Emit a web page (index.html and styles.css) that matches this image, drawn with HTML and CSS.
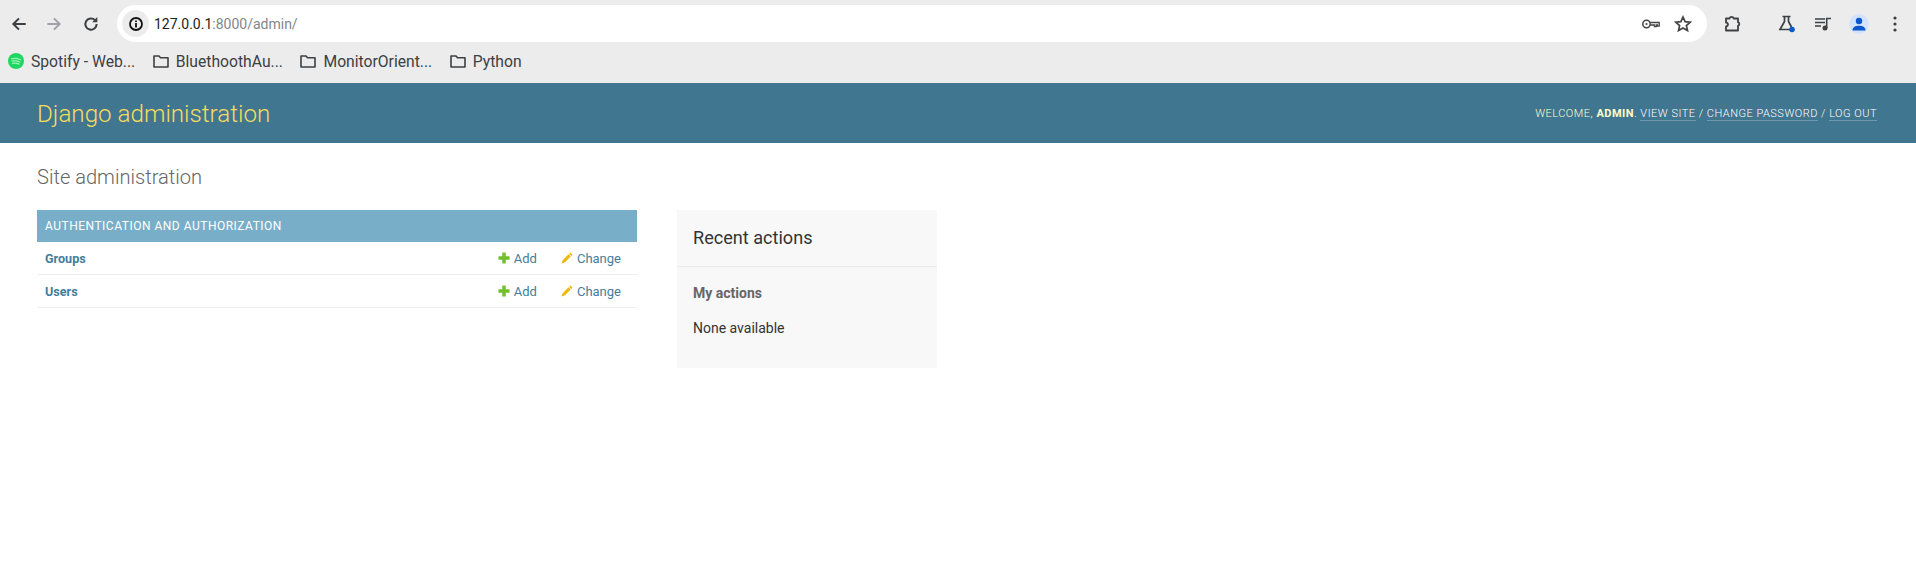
FILE: index.html
```html
<!DOCTYPE html>
<html>
    <head>
        <title>Site administration</title>
        <link rel="stylesheet" href="styles.css">
    </head>
    <body>
        <div class="chrome">
            <div class="toolbar">
                <svg class="navIcon" viewBox="0 0 16 16"><path d="M14 8H3M8 3L3 8l5 5" fill="none" stroke="#3c4043" stroke-width="1.8"/></svg>
                <svg class="navIcon forward" viewBox="0 0 16 16"><path d="M2 8h11M8 3l5 5-5 5" fill="none" stroke="#a0a2a5" stroke-width="1.8"/></svg>
                <svg class="navIcon reload" viewBox="0 0 16 16"><path d="M13 8a5 5 0 1 1-1.5-3.5" fill="none" stroke="#3c4043" stroke-width="1.8"/><path d="M13.6 1.8v4.6H9z" fill="#3c4043"/></svg>
                <div class="omnibox">
                    <span class="siteInfo">
                        <svg viewBox="0 0 16 16" width="16" height="16"><circle cx="8" cy="8" r="6" fill="none" stroke="#111" stroke-width="1.8"/><path d="M8 7v4.4M8 4.4v1.5" stroke="#111" stroke-width="1.8"/></svg>
                    </span>
                    <span class="url">127.0.0.1<span class="urlDim">:8000/admin/</span></span>
                    <svg class="keyIcon" viewBox="0 0 18 10" width="18" height="10"><circle cx="4.500" cy="5" r="3.700" fill="none" stroke="#444" stroke-width="1.500"/><circle cx="4.500" cy="5" r="1.100" fill="#444"/><path d="M8.200 3.500h9v3.700h-1.800V6h-1.200v1.700h-1.800V6H8.200" fill="none" stroke="#444" stroke-width="1.300"/></svg>
                    <svg class="starIcon" viewBox="0 0 18 18" width="18" height="18"><path d="M9 2l2.100 4.700 5.100.5-3.800 3.400 1.100 5L9 13l-4.500 2.600 1.100-5-3.800-3.400 5.100-.5z" fill="none" stroke="#444" stroke-width="1.700"/></svg>
                </div>
                <svg class="extIcon" viewBox="0 0 18 18" width="18" height="18"><path d="M2 3.500h3.500a2.200 2.200 0 0 1 4.200 0H14v3.700a1.900 1.900 0 0 1 0 3.600v4.700H2v-4a2 2 0 0 0 0-4z" fill="none" stroke="#3c4043" stroke-width="1.800" stroke-linejoin="round"/></svg>
                <svg class="labIcon" viewBox="0 0 20 20" width="20" height="20"><path d="M5.500 2.500h8M7.500 2.500v5L3 15.500h10" fill="none" stroke="#3c4043" stroke-width="1.700"/><path d="M11.500 2.500v5l3 5.500" fill="none" stroke="#3c4043" stroke-width="1.700"/><circle cx="15" cy="15.500" r="2.800" fill="#0b57d0"/></svg>
                <svg class="mediaIcon" viewBox="0 0 16 14" width="16" height="14"><path d="M0 2h10M0 5.500h10M0 9h6" stroke="#3c4043" stroke-width="1.500"/><circle cx="10" cy="11" r="2.500" fill="#3c4043"/><path d="M11.700 11V1.500H16" fill="none" stroke="#3c4043" stroke-width="1.600"/></svg>
                <span class="avatar">
                    <svg viewBox="0 0 14 14" width="14" height="14"><circle cx="7" cy="4" r="3.200" fill="#0b57d0"/><path d="M0.500 13.500c0-3.500 3-4.800 6.500-4.800s6.500 1.300 6.500 4.800z" fill="#0b57d0"/></svg>
                </span>
                <svg class="menuIcon" viewBox="0 0 4 16" width="4" height="16"><circle cx="2" cy="2" r="1.600" fill="#3c4043"/><circle cx="2" cy="8" r="1.600" fill="#3c4043"/><circle cx="2" cy="14" r="1.600" fill="#3c4043"/></svg>
            </div>
            <div class="bookmarks">
                <span class="bookmark">
                    <svg viewBox="0 0 16 16" width="16" height="16"><circle cx="8" cy="8" r="8" fill="#1ed760"/><path d="M3.500 5.800c3-.8 6-.6 9 .9M4 8.100c2.600-.6 5.200-.4 7.800.9M4.500 10.300c2.200-.5 4.400-.3 6.500.8" fill="none" stroke="#9ff0bb" stroke-width="1.200" stroke-linecap="round"/></svg>
                    Spotify - Web...
                </span>
                <span class="bookmark">
                    <svg viewBox="0 0 16 14" width="16" height="14"><path d="M1 2h5l1.500 1.800H15V13H1z" fill="none" stroke="#3c4043" stroke-width="1.600" stroke-linejoin="round"/></svg>
                    BluethoothAu...
                </span>
                <span class="bookmark">
                    <svg viewBox="0 0 16 14" width="16" height="14"><path d="M1 2h5l1.500 1.800H15V13H1z" fill="none" stroke="#3c4043" stroke-width="1.600" stroke-linejoin="round"/></svg>
                    MonitorOrient...
                </span>
                <span class="bookmark">
                    <svg viewBox="0 0 16 14" width="16" height="14"><path d="M1 2h5l1.500 1.800H15V13H1z" fill="none" stroke="#3c4043" stroke-width="1.600" stroke-linejoin="round"/></svg>
                    Python
                </span>
            </div>
        </div>

        <div id="header">
            <div id="branding">Django administration</div>
            <div id="userTools">
                WELCOME, <strong>ADMIN</strong>.
                <a href="#">VIEW SITE</a> /
                <a href="#">CHANGE PASSWORD</a> /
                <a href="#">LOG OUT</a>
            </div>
        </div>

        <div id="content">
            <h1>Site administration</h1>
            <div class="columns">
                <div class="appList">
                    <div class="caption">AUTHENTICATION AND AUTHORIZATION</div>
                    <div class="modelRow">
                        <a class="modelName" href="#">Groups</a>
                        <a class="addLink" href="#">
                            <svg viewBox="0 0 12 12" width="12" height="12"><path d="M4.300 .5h3.400v3.800h3.800v3.400H7.700v3.800H4.300V7.700H.5V4.300h3.800z" fill="#70bf2b"/></svg>
                            Add
                        </a>
                        <a class="changeLink" href="#">
                            <svg viewBox="0 0 12 12" width="12" height="12"><path d="M9.300 .5l2.200 2.200-1.200 1.200-2.200-2.200zM7.500 2.300l2.200 2.200-6 6-3 1 .8-3z" fill="#efb80b"/></svg>
                            Change
                        </a>
                    </div>
                    <div class="modelRow">
                        <a class="modelName" href="#">Users</a>
                        <a class="addLink" href="#">
                            <svg viewBox="0 0 12 12" width="12" height="12"><path d="M4.300 .5h3.400v3.800h3.800v3.400H7.700v3.800H4.300V7.700H.5V4.300h3.800z" fill="#70bf2b"/></svg>
                            Add
                        </a>
                        <a class="changeLink" href="#">
                            <svg viewBox="0 0 12 12" width="12" height="12"><path d="M9.300 .5l2.200 2.200-1.200 1.200-2.200-2.200zM7.500 2.300l2.200 2.200-6 6-3 1 .8-3z" fill="#efb80b"/></svg>
                            Change
                        </a>
                    </div>
                </div>
                <div class="recentActions">
                    <h2>Recent actions</h2>
                    <h3>My actions</h3>
                    <p>None available</p>
                </div>
            </div>
        </div>
    </body>
</html>
```

FILE: styles.css
```css
html, body{
    margin:0;
    padding:0;
    background-color:white;
}
body{
    height:574px;
    overflow:hidden;
    font-family:Roboto, "Liberation Sans", sans-serif;
    color:#333;
}
h1,h2,h3,p{
    margin:0;
}
a{
    text-decoration:none;
}

/* Browser bars */
.chrome{
    height:83px;
    background-color:#ececec;
    box-sizing:border-box;
    padding-top:5px;
}
.toolbar{
    height:37px;
    display:flex;
    align-items:center;
}
.navIcon{
    width:18px;
    height:18px;
    margin-left:10px;
    flex:none;
}
.navIcon.forward{
    margin-left:17px;
}
.navIcon.reload{
    margin-left:19px;
}
.omnibox{
    flex:none;
    width:1590px;
    height:37px;
    margin-left:17px;
    background-color:white;
    border-radius:19px;
    display:flex;
    align-items:center;
    box-sizing:border-box;
    padding-left:5px;
}
.siteInfo{
    width:27px;
    height:27px;
    border-radius:50%;
    background-color:#ececec;
    display:flex;
    align-items:center;
    justify-content:center;
    flex:none;
}
.url{
    margin-left:5px;
    font-size:14px;
    color:#202124;
    flex:1;
}
.urlDim{
    color:#80868b;
}
.keyIcon{
    margin-right:14px;
}
.starIcon{
    margin-right:15px;
}
.extIcon{
    margin-left:17px;
}
.labIcon{
    margin-left:35px;
}
.mediaIcon{
    margin-left:18px;
}
.avatar{
    width:14px;
    height:14px;
    padding:3px;
    margin-left:18px;
    border-radius:50%;
    background-color:#d3e3fd;
    display:flex;
}
.menuIcon{
    margin-left:24px;
}
.bookmarks{
    height:38px;
    display:flex;
    align-items:center;
    padding-left:8px;
    gap:17.5px;
}
.bookmark{
    display:flex;
    align-items:center;
    gap:7px;
    font-size:15.7px;
    color:#3c4043;
}

/* Django header */
#header{
    height:60px;
    background-color:#417690;
    display:flex;
    align-items:center;
    justify-content:space-between;
    padding:0 39px 0 37px;
}
#branding{
    font-size:24.2px;
    font-weight:300;
    color:#f5dd5d;
    padding-top:2px;
}
#userTools{
    font-size:11px;
    font-weight:300;
    letter-spacing:0.5px;
    color:#ffc;
}
#userTools strong{
    font-weight:700;
}
#userTools a{
    color:white;
    border-bottom:1px solid rgba(255,255,255,0.25);
}

/* Content */
#content{
    padding:22px 37px 0;
}
#content h1{
    font-size:20.1px;
    font-weight:300;
    color:#666;
    line-height:24px;
    margin-bottom:21px;
}
.columns{
    display:flex;
    align-items:flex-start;
    gap:40px;
}
.appList{
    width:600px;
}
.caption{
    height:32px;
    line-height:32px;
    background-color:#79aec8;
    color:white;
    font-size:12px;
    letter-spacing:0.5px;
    padding-left:8px;
}
.modelRow{
    height:32px;
    border-bottom:1px solid #eee;
    display:flex;
    align-items:center;
    padding:0 16px 0 8px;
    font-size:13px;
}
.modelRow a{
    color:#447e9b;
    display:flex;
    align-items:center;
    gap:4px;
}
.modelName{
    font-weight:700;
    font-size:12.6px;
    flex:1;
}
.changeLink{
    margin-left:24px;
}
.recentActions{
    width:260px;
    height:158px;
    background-color:#f8f8f8;
}
.recentActions h2{
    font-size:18.1px;
    font-weight:400;
    color:#333;
    padding:16px 16px 16px;
    line-height:24px;
    border-bottom:1px solid #eaeaea;
}
.recentActions h3{
    font-size:14px;
    font-weight:700;
    color:#666;
    padding:18px 16px 0;
}
.recentActions p{
    font-size:14px;
    padding:19px 16px 0;
}
```
